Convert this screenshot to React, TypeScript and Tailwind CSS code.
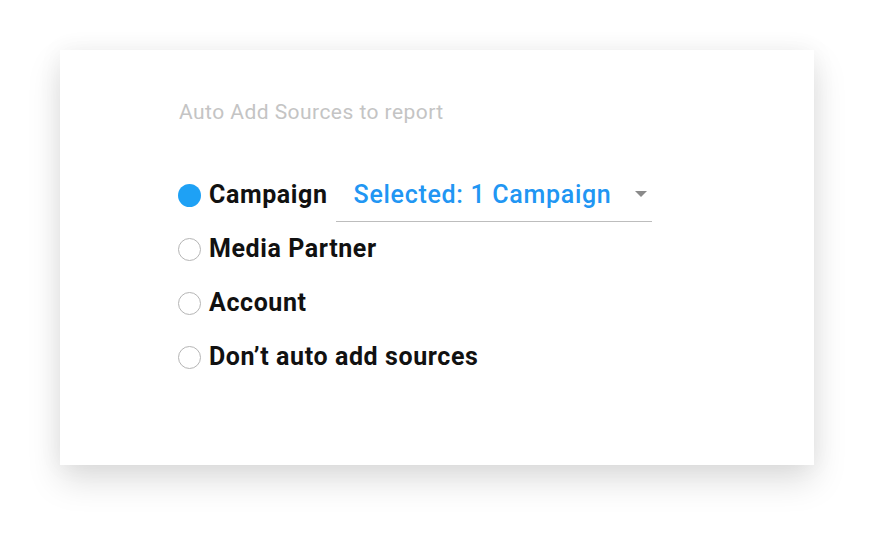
import React from "react";

function Radio({ checked }: { checked?: boolean }) {
  return checked ? (
    <span className="block w-[23px] h-[23px] rounded-full bg-[#1ea1f5] shrink-0" />
  ) : (
    <span className="block w-[23px] h-[23px] rounded-full border-[1.5px] border-[#b5b5b5] bg-white shrink-0" />
  );
}

export default function App() {
  const rows = ["Media Partner", "Account", "Don’t auto add sources"];
  return (
    <div className="w-[874px] h-[536px] bg-white pt-[50px] pl-[60px]" style={{ fontFamily: "Roboto, 'Liberation Sans', sans-serif" }}>
      <div className="w-[754px] h-[415px] bg-white shadow-[0_16px_32px_rgba(0,0,0,0.13),0_0_24px_rgba(0,0,0,0.05)] pt-[49px] pl-[118px]">
        <div className="text-[21px] leading-[26px] tracking-[0.45px] text-[#c4c4c4] pl-[1px]">Auto Add Sources to report</div>
        <div className="mt-[43px] flex flex-col">
          <div className="h-[54px] flex items-center">
            <Radio checked />
            <span className="ml-[8px] text-[25px] tracking-[0.6px] font-bold text-[#111]">Campaign</span>
            <div className="ml-[8px] w-[316px] h-[52px] mt-[1px] border-b border-[#bdbdbd] flex items-center pl-[18px] pr-[5px]">
              <span className="text-[25px] tracking-[0.7px] font-medium text-[#2196f3] flex-1 whitespace-nowrap">Selected: 1 Campaign</span>
              <svg width="12" height="7" viewBox="0 0 12 7" className="mt-[-1px]">
                <path d="M0 0 L12 0 L6 6 Z" fill="#8a8a8a" />
              </svg>
            </div>
          </div>
          {rows.map((r) => (
            <div key={r} className="h-[54px] flex items-center">
              <Radio />
              <span className="ml-[8px] text-[25px] tracking-[0.6px] font-bold text-[#111]">{r}</span>
            </div>
          ))}
        </div>
      </div>
    </div>
  );
}
